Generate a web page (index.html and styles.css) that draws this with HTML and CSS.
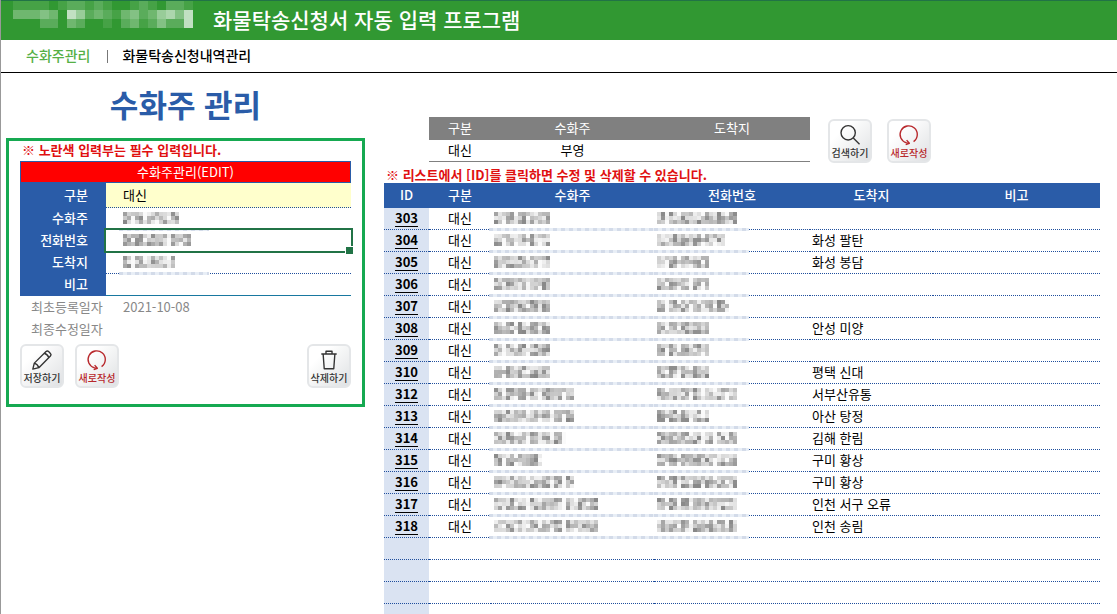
FILE: index.html
```html
<!DOCTYPE html>
<html lang="ko">
<head>
<meta charset="utf-8">
<title>화물탁송신청서 자동 입력 프로그램</title>
<link rel="stylesheet" href="styles.css">
</head>
<body>
<svg class="defs" aria-hidden="true">
  <symbol id="i-reset" viewBox="0 0 24 24"><path d="M17 19.2A9.4 9.4 0 1 0 9.4 20.6L12.4 21M9.4 17.6l3 3.4-4 1.6"/></symbol>
  <symbol id="i-pencil" viewBox="0 0 24 24"><path d="M2 22l1.6-6.6L16.4 2.8a2 2 0 0 1 2.8 0l2 2a2 2 0 0 1 0 2.8L8.6 20.4zM3.6 15.4q3.6 1 5 5M14.6 4.6q3.4 1 4.8 4.8"/></symbol>
  <symbol id="i-trash" viewBox="0 0 24 24"><path d="M3.6 5.5h16.8M8.7 5.5V2.4h6.6v3.1M5.6 5.5l1.2 16h10.4l1.2-16"/></symbol>
  <symbol id="i-search" viewBox="0 0 24 24"><circle cx="10" cy="9.6" r="7.8"/><path d="M15.6 15.2l6.8 6.8"/></symbol>
</svg>
<div class="app">
  <header class="topbar">
    <span class="logo" data-logo></span>
    <h1 class="program">화물탁송신청서 자동 입력 프로그램</h1>
  </header>
  <nav class="tabs">
    <a class="tab current" href="#consignee">수화주관리</a>
    <span class="divider"></span>
    <a class="tab" href="#history">화물탁송신청내역관리</a>
  </nav>
  <main class="main">
    <section class="left">
      <h2 class="title">수화주 관리</h2>
      <form class="panel">
        <p class="notice">※ 노란색 입력부는 필수 입력입니다.</p>
        <h3 class="edit-title">수화주관리(EDIT)</h3>
        <div class="field required"><label for="kind">구분</label><div class="value"><input id="kind" value="대신"></div></div>
        <div class="field"><label for="name">수화주</label><div class="value masked"><input id="name"><span class="mosaic" data-width="56" data-seed="5"></span></div></div>
        <div class="field"><label for="tel">전화번호</label><div class="value selected"><input id="tel"><span class="mosaic" data-width="68" data-seed="8"></span></div></div>
        <div class="field"><label for="dest">도착지</label><div class="value masked"><input id="dest"><span class="mosaic" data-width="52" data-seed="11"></span></div></div>
        <div class="field last"><label for="memo">비고</label><div class="value"><input id="memo"></div></div>
        <dl class="dates">
          <dt>최초등록일자</dt><dd>2021-10-08</dd>
          <dt>최종수정일자</dt><dd></dd>
        </dl>
        <div class="actions">
          <button class="tool" type="button"><svg><use href="#i-pencil"/></svg>저장하기</button>
          <button class="tool red" type="button"><svg><use href="#i-reset"/></svg>새로작성</button>
          <button class="tool end" type="button"><svg><use href="#i-trash"/></svg>삭제하기</button>
        </div>
      </form>
    </section>
    <section class="right">
      <form class="search">
        <table class="criteria">
          <colgroup><col class="c-kind"><col class="c-name"><col class="c-tel"></colgroup>
          <thead><tr><th>구분</th><th>수화주</th><th>도착지</th></tr></thead>
          <tbody><tr>
            <td><input aria-label="구분" value="대신"></td>
            <td><input aria-label="수화주" value="부영"></td>
            <td><input aria-label="도착지"></td>
          </tr></tbody>
        </table>
        <button class="tool" type="button"><svg><use href="#i-search"/></svg>검색하기</button>
        <button class="tool red" type="button"><svg><use href="#i-reset"/></svg>새로작성</button>
      </form>
      <p class="notice list-notice">※ 리스트에서 [ID]를 클릭하면 수정 및 삭제할 수 있습니다.</p>
      <table class="list">
        <colgroup><col class="c-id"><col class="c-kind"><col class="c-name"><col class="c-tel"><col class="c-dest"><col></colgroup>
        <thead><tr><th>ID</th><th>구분</th><th>수화주</th><th>전화번호</th><th>도착지</th><th>비고</th></tr></thead>
        <tbody id="rows"></tbody>
      </table>
    </section>
  </main>
</div>
<script src="app.js"></script>
</body>
</html>
```
FILE: styles.css
```css
* { box-sizing: border-box; }
body {
  margin: 0;
  font-family: "Noto Sans CJK KR", sans-serif;
  font-size: 13px;
  line-height: 19px;
  color: #000;
  background: #fff;
}
h1, h2, h3, p, dl, dd { margin: 0; }
.defs { display: none; }
.app {
  position: relative;
  display: flex;
  flex-direction: column;
  height: 100vh;
  overflow: hidden;
  border-left: 1px solid #999;
}
.app::before {
  content: "";
  position: absolute;
  left: -1px;
  top: 229px;
  width: 1px;
  height: 23px;
  background: #217346;
}
.topbar {
  display: flex;
  flex: none;
  align-items: center;
  gap: 20px;
  height: 40px;
  padding-left: 12px;
  background: #319832;
  border-top: 1px solid #217346;
}
.logo { align-self: flex-start; height: 27px; }
.logo svg { display: block; }
.program { font-size: 21px; line-height: 30px; font-weight: 500; color: #fff; padding-bottom: 4px; }
.tabs {
  display: flex;
  flex: none;
  align-items: center;
  height: 33px;
  padding: 0 0 2px 25px;
  border-bottom: 1px solid #000;
}
.tab { font-size: 14px; font-weight: 500; color: #000; text-decoration: none; }
.current { color: #55b046; }
.divider { width: 1px; height: 13px; margin: 2px 14px 0 17px; background: #777; }
.main { display: grid; grid-template-columns: 383px minmax(0, 1fr); flex: 1; min-height: 0; }
.left { padding: 11px 19px 0 5px; }
.title {
  margin: 0 0 14px;
  text-align: center;
  font-size: 31px;
  line-height: 40px;
  font-weight: 700;
  color: #2a5ca8;
}
.panel { padding: 1px 11px 16px; border: 3px solid #16a951; }
.notice { font-size: 13px; line-height: 16px; font-weight: 700; color: #e01010; white-space: nowrap; }
.panel .notice { margin: 0 0 3px 2px; }
.edit-title {
  height: 22px;
  border: 1px solid #2a5ca8;
  background: #f00;
  color: #fff;
  font-size: 13px;
  line-height: 19px;
  font-weight: 400;
  text-align: center;
}
.field { display: flex; height: 22px; }
.field label {
  width: 86px;
  padding-right: 18px;
  background: #2a5ca8;
  color: #fff;
  font-weight: 500;
  line-height: 20px;
  text-align: right;
}
.value { position: relative; flex: 1; border-bottom: 1px dotted #1f4e9c; }
.required { height: 25px; }
.required label { line-height: 23px; }
.required .value { background: #ffc; }
.last .value { border-bottom: 1px solid #1878a0; }
input {
  display: block;
  width: 100%;
  height: 100%;
  padding: 0 0 2px;
  border: 0;
  background: transparent;
  font: inherit;
  color: inherit;
}
.value input { padding-left: 17px; }
.value .mosaic { position: absolute; left: 17px; top: 4px; }
.masked::after {
  content: "";
  position: absolute;
  z-index: 1;
  left: 13px;
  bottom: -2px;
  width: 90px;
  height: 3px;
  background: repeating-linear-gradient(90deg, #d3dbe9 0 4px, #e8eef6 4px 8px);
}
.selected::before {
  content: "";
  position: absolute;
  z-index: 2;
  inset: -2px -2px -2px -2px;
  border: 2px solid #217346;
}
.selected::after {
  content: "";
  position: absolute;
  z-index: 3;
  right: -3px;
  bottom: -4px;
  width: 7px;
  height: 7px;
  border: 1px solid #fff;
  background: #217346;
}
.dates { display: grid; grid-template-columns: 103px 1fr; color: #888; line-height: 21px; grid-auto-rows: 22px; }
.dates dt { padding-left: 11px; }
.actions { display: flex; gap: 11px; margin-top: 4px; }
.end { margin-left: auto; }
.tool {
  display: flex;
  flex-direction: column;
  align-items: center;
  flex: none;
  width: 44px;
  height: 44px;
  padding: 3px 0 0;
  border: 2px solid #e4e6e8;
  border-radius: 6px;
  background: linear-gradient(135deg, #fff 25%, #dfe1e3);
  font-family: inherit;
  font-size: 10px;
  font-weight: 500;
  line-height: 13px;
  color: #333;
  white-space: nowrap;
}
.tool svg {
  width: 22px;
  height: 22px;
  fill: none;
  stroke: #333;
  stroke-width: 1.5;
  stroke-linejoin: round;
}
.red { color: #b8282c; }
.red svg { stroke: #b8282c; }
.right { padding: 44px 17px 0 0; }
.search { display: flex; align-items: flex-end; padding-left: 45px; height: 46px; }
.search .tool { margin-right: 15px; }
table { border-spacing: 0; table-layout: fixed; }
th, td { padding: 0 0 2px; }
.criteria { width: 381px; margin: 0 18px 1px 0; }
.criteria th { height: 23px; background: #808080; color: #fff; font-weight: 400; }
.criteria td { height: 22px; padding: 0; border-bottom: 1px solid #808080; }
.criteria input { text-align: center; height: 21px; }
.list-notice { margin: 4px 0 0 2px; }
.c-id { width: 45px; }
.c-kind { width: 62px; }
.c-name { width: 163px; }
.c-tel { width: 156px; }
.c-dest { width: 123px; }
.list { width: 100%; }
.list th { height: 25px; background: #2a5ca8; color: #fff; font-weight: 500; }
.list td { position: relative; height: 22px; border-bottom: 1px dotted #1f4e9c; }
.list .id { background: #dae3f2; text-align: center; }
.id a { font-weight: 700; color: #000; text-underline-offset: 3px; }
.kind { text-align: center; }
.dest { padding-left: 2px; }
.list .mosaic { display: block; margin-left: 3px; }
.list .masked::after { left: -2px; width: auto; right: 0; }
.list .tel::after { left: 0; right: 61px; }
.mosaic svg { display: block; }
```
FILE: app.js
```js
const rows = [
  [303, "", 56, 80], [304, "화성 팔탄", 56, 68], [305, "화성 봉담", 56, 52],
  [306, "", 56, 52], [307, "", 56, 72], [308, "안성 미양", 56, 52],
  [309, "", 56, 52], [310, "평택 신대", 56, 52], [312, "서부산유통", 80, 80],
  [313, "아산 탕정", 80, 52], [314, "김해 한림", 72, 80], [315, "구미 황상", 48, 80],
  [316, "구미 황상", 80, 80], [317, "인천 서구 오류", 104, 80], [318, "인천 송림", 104, 80]
];
const EMPTY_ROWS = 4;

const mask = (cls, width, seed) =>
  `<td class="masked ${cls}"><span class="mosaic" data-width="${width}" data-seed="${seed}"></span></td>`;

document.getElementById("rows").innerHTML =
  rows.map(([id, dest, nameWidth, telWidth]) =>
    `<tr><td class="id"><a href="#${id}">${id}</a></td><td class="kind">대신</td>` +
    mask("name", nameWidth, id) + mask("tel", telWidth, id * 3) +
    `<td class="dest">${dest}</td><td></td></tr>`).join("") +
  `<tr><td class="id"></td><td></td><td></td><td></td><td></td><td></td></tr>`.repeat(EMPTY_ROWS);

// Private values are shown as a grid of grey cells.
document.querySelectorAll(".mosaic").forEach(el => {
  const width = Number(el.dataset.width);
  let seed = Number(el.dataset.seed) * 7919;
  const random = () => (seed = (seed * 16807 + 11) % 2147483647) / 2147483647;
  random();
  let cells = "";
  for (let x = 0; x < width; x += 4) {
    for (let y = 0; y < 12; y += 4) {
      const edge = x % 12 === 8 ? 40 : 0;
      const shade = Math.min(250, Math.round(135 + random() * 105 + edge));
      cells += `<rect x="${x}" y="${y}" width="4" height="4" fill="rgb(${shade},${shade},${shade})"/>`;
    }
  }
  el.innerHTML = `<svg width="${width}" height="12" aria-hidden="true">${cells}</svg>`;
});

const logoRows = ["11110122121001210221", "33343075232134235647", "00022032001023124227"];
document.querySelector("[data-logo]").innerHTML =
  `<svg width="180" height="27" aria-hidden="true">` +
  logoRows.map((line, y) => [...line].map((level, x) =>
    `<rect x="${x * 9}" y="${y * 9}" width="9" height="9" fill="#fff" opacity="${level / 10}"/>`).join("")).join("") +
  `</svg>`;
```
